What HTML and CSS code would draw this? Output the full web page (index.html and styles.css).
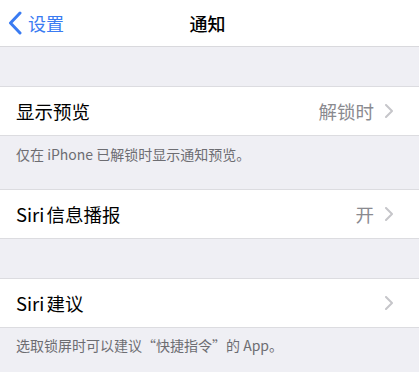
FILE: index.html
```html
<!DOCTYPE html>
<html lang="zh">

<head>
	<meta charset="utf-8">
	<title>通知</title>
	<link rel="stylesheet" href="styles.css">
</head>

<body>
	<div class="nav">
		<a class="back">
			<svg class="back-icon" width="14" height="24" viewBox="0 0 14 24">
				<path d="M12 2 L2.5 12 L12 22" />
			</svg>
			<span>设置</span>
		</a>
		<div class="title">通知</div>
		<div></div>
	</div>

	<div class="gap"></div>
	<div class="row">
		<span class="label">显示预览</span>
		<span class="value">解锁时</span>
		<svg class="chevron" width="8" height="14" viewBox="0 0 8 14"><path d="M1 1 L7 7 L1 13" /></svg>
	</div>
	<p class="footer">仅在 iPhone 已解锁时显示通知预览。</p>

	<div class="row">
		<span class="label">Siri 信息播报</span>
		<span class="value">开</span>
		<svg class="chevron" width="8" height="14" viewBox="0 0 8 14"><path d="M1 1 L7 7 L1 13" /></svg>
	</div>
	<div class="gap"></div>
	<div class="row">
		<span class="label">Siri 建议</span>
		<svg class="chevron" width="8" height="14" viewBox="0 0 8 14"><path d="M1 1 L7 7 L1 13" /></svg>
	</div>
	<p class="footer last">选取锁屏时可以建议“快捷指令”的 App。</p>
</body>

</html>
```

FILE: styles.css
```css
/* common css */
* {
	margin: 0;
	padding: 0;
	box-sizing: border-box;
}

body {
	font-family: "Noto Sans CJK SC", "Noto Sans", sans-serif;
	background-color: #EFEFF4;
	color: #000;
	width: 419px;
	height: 372px;
	overflow: hidden;
}

/* nav bar */
.nav {
	display: grid;
	grid-template-columns: 1fr auto 1fr;
	align-items: center;
	height: 47px;
	background-color: #FFF;
	border-bottom: 1px solid #D9D9DD;
}

.back {
	display: flex;
	align-items: center;
	gap: 6px;
	padding-left: 8px;
	color: #3A7BF2;
	font-size: 18px;
}

.back-icon path {
	fill: none;
	stroke: #3A7BF2;
	stroke-width: 3;
	stroke-linecap: round;
	stroke-linejoin: round;
}

.title {
	font-size: 18px;
	font-weight: 500;
	margin-right: 4px;
}

/* table rows */
.gap {
	height: 39px;
}

.row {
	display: flex;
	align-items: center;
	height: 50px;
	padding: 0 26px 0 16px;
	background-color: #FFF;
	border-top: 1px solid #DCDCE0;
	border-bottom: 1px solid #DCDCE0;
	font-size: 18.5px;
}

.label {
	flex: 1;
	word-spacing: -2px;
}

.value {
	color: #8A8A8F;
	margin-right: 11px;
}

.chevron path {
	fill: none;
	stroke: #C6C6CA;
	stroke-width: 2;
	stroke-linecap: round;
	stroke-linejoin: round;
}

/* footer text */
.footer {
	height: 53px;
	padding: 8px 16px 0;
	font-size: 14px;
	line-height: 20px;
	color: #6D6D72;
}

.footer.last {
	padding-top: 7px;
}
```
